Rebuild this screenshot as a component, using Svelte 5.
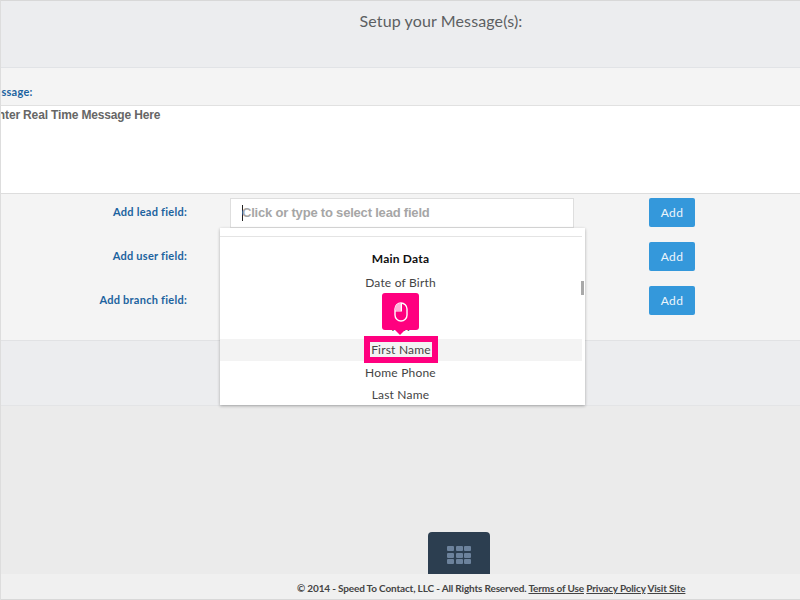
<script>
  const rows = [
    { label: 'Add lead field:', field: true },
    { label: 'Add user field:' },
    { label: 'Add branch field:' }
  ];
</script>

<div class="page">
  <header class="head"><h1>Setup your Message(s):</h1></header>
  <div class="msg-label"><span>Real Time Message:</span></div>
  <div class="msg-box"><span>Enter Real Time Message Here</span></div>
  <section class="fields">
    {#each rows as r}
      <div class="row">
        <div class="lbl">{r.label}</div>
        <div class="ctl">
          {#if r.field}
            <div class="input"><i class="caret"></i><span>Click or type to select lead field</span></div>
          {/if}
        </div>
        <div class="act"><button>Add</button></div>
      </div>
    {/each}
    <div class="drop">
      <div class="rule"></div>
      <div class="opt group">Main Data</div>
      <div class="opt dob">Date of Birth</div>
      <div class="opt hidden-opt">Fax</div>
      <div class="opt hover"><span class="hl">First Name</span></div>
      <div class="opt home">Home Phone</div>
      <div class="opt last">Last Name</div>
      <div class="thumb"></div>
      <div class="tip">
        <svg width="14" height="20" viewBox="0 0 14 20" fill="none">
          <rect x="1" y="1" width="12" height="18" rx="6" stroke="#fff" stroke-width="1.4" />
          <path d="M1 8.5H7V1C3.5 1 1 3.5 1 7Z" fill="#ffb3da" />
          <path d="M1 9H7.4V1" stroke="#fff" stroke-width="1.2" />
        </svg>
      </div>
    </div>
  </section>
  <div class="band"></div>
  <div class="rest">
    <div class="launcher">
      <div class="grid">
        {#each Array(9) as _}<b></b>{/each}
      </div>
    </div>
  </div>
  <footer class="foot">
    <span>© 2014 - Speed To Contact, LLC - All Rights Reserved.</span>
    <a href="#t">Terms of Use</a> <a href="#p">Privacy Policy</a> <a href="#v">Visit Site</a>
  </footer>
</div>

<style>
  :global(body) { margin: 0; background: #ebebeb; }
  .page {
    width: 800px; height: 600px; box-sizing: border-box; overflow: hidden;
    border-left: 1px solid #ddd; border-top: 1px solid #d8d8d8;
    display: flex; flex-direction: column;
    font-family: Lato, "Open Sans", sans-serif; background: #ebebeb;
  }
  .head { height: 67px; flex: none; box-sizing: border-box; background: #ecedef; border-bottom: 1px solid #e1e3e6; text-align: center; }
  h1 { margin: 0; padding-top: 11px; padding-left: 81px; font-size: 16px; line-height: 18px; font-weight: 400; color: #5c5f62; letter-spacing: .12px; }
  .msg-label { height: 38px; flex: none; background: #f4f4f4; border-bottom: 1px solid #e1e1e1; box-sizing: border-box; padding-top: 17px; overflow: hidden; white-space: nowrap; }
  .msg-label span { display: block; margin-left: -69px; font-size: 11px; line-height: 13px; font-weight: 700; color: #1c639f; letter-spacing: .25px; }
  .msg-box { height: 88px; flex: none; box-sizing: border-box; background: #fff; border-bottom: 1px solid #ddd; overflow: hidden; white-space: nowrap; }
  .msg-box span { display: block; margin: 2px 0 0 -11px; font: 700 12px/14px "Liberation Sans", Arial, sans-serif; color: #666; letter-spacing: -.15px; }
  .fields { position: relative; height: 147px; flex: none; background: #f4f4f4; border-bottom: 1px solid #e1e2e4; box-sizing: border-box; padding-top: 4px; }
  .row { display: flex; height: 44px; }
  .lbl { width: 186px; flex: none; text-align: right; font-size: 11px; line-height: 13px; padding-top: 7px; font-weight: 700; color: #1c639f; box-sizing: border-box; letter-spacing: .25px; }
  .ctl { margin-left: 43px; width: 344px; flex: none; }
  .input { height: 30px; box-sizing: border-box; background: #fff; border: 1px solid #dedede; display: flex; align-items: center; padding-left: 11px; font: 700 13px "Liberation Sans", Arial, sans-serif; color: #a6a6a6; letter-spacing: -.2px; }
  .input span { margin: -1px 0 0 -1px; }
  .caret { width: 1px; height: 16px; background: #222; flex: none; }
  .act { margin-left: 75px; }
  button { width: 46px; height: 29px; display: block; padding: 0; border: 0; border-radius: 2px; background: #3498db; color: #ecf5fb; font: 400 12px Lato, sans-serif; letter-spacing: .3px; }
  .drop { position: absolute; left: 219px; top: 34px; width: 365px; height: 177px; background: #fff; box-shadow: 0 1px 3px rgba(0,0,0,.3); text-align: center; font-size: 12px; color: #444; letter-spacing: .2px; }
  .rule { position: absolute; left: 0; right: 3px; top: 8px; height: 1px; background: #e4e4e4; }
  .opt { position: absolute; left: 0; right: 4px; line-height: 16px; }
  .group { top: 23px; font-weight: 700; color: #111; }
  .dob { top: 47px; }
  .hidden-opt { top: 91px; }
  .hover { top: 111px; height: 22px; right: 3px; background: #f3f3f3; line-height: 22px; }
  .hl { display: inline-block; height: 15px; line-height: 15px; padding: 0 1px; background: #f3f3f3; box-shadow: 0 0 0 6px #ff007f; }
  .home { top: 137px; }
  .last { top: 159px; }
  .thumb { position: absolute; right: 1px; top: 53px; width: 3px; height: 14px; background: #a9a9a9; }
  .tip { position: absolute; left: 162px; top: 65px; width: 37px; height: 37px; background: #ff007f; border-radius: 3px; display: flex; align-items: center; justify-content: center; }
  .tip::after { content: ""; position: absolute; left: 13px; bottom: -5px; border: 5px solid transparent; border-bottom: 0; border-top-color: #ff007f; }
  .band { height: 65px; flex: none; box-sizing: border-box; background: #ecedef; border-bottom: 1px solid #e3e4e6; }
  .rest { flex: 1; display: flex; justify-content: center; align-items: flex-end; padding-left: 117px; overflow: hidden; min-height: 0; }
  .launcher { width: 62px; height: 42px; background: #2c3e50; border-radius: 4px 4px 0 0; box-sizing: border-box; padding-top: 14px; }
  .grid { display: grid; grid-template-columns: repeat(3, 7px); grid-auto-rows: 5px; gap: 1.5px; justify-content: center; }
  .grid b { background: #6c829c; border-radius: 1px; }
  .foot { height: 26px; flex: none; background: #f0f0f0; border-bottom: 1px solid #d8d8d8; box-sizing: border-box; padding: 8px 0 0 296px; font-size: 10px; line-height: 13px; font-weight: 700; color: #444; white-space: nowrap; letter-spacing: -.16px; }
  .foot a { color: #444; }
</style>
